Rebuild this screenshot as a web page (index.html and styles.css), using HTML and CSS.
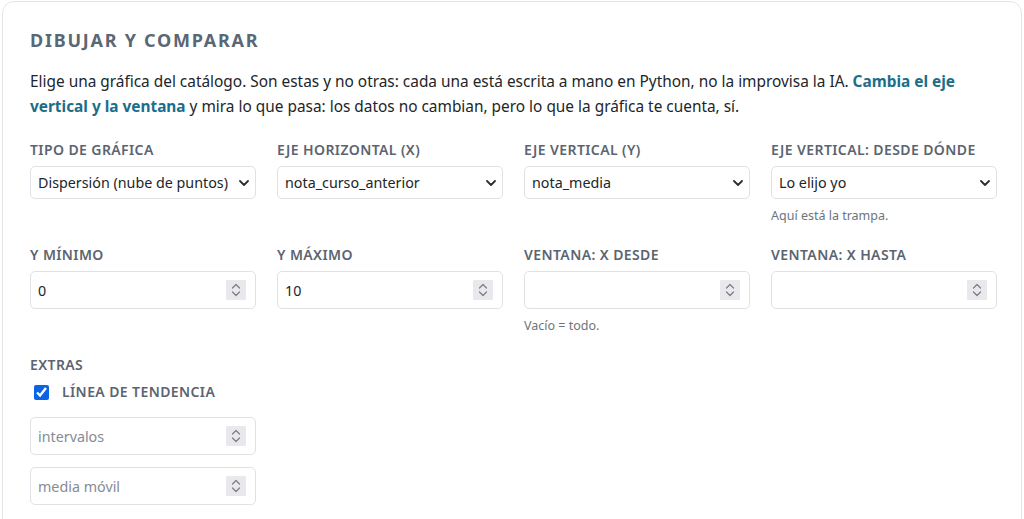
FILE: index.html
```html
<!DOCTYPE html>
<html lang="es">
<head>
<meta charset="utf-8">
<title>Dibujar y comparar</title>
<link rel="stylesheet" href="styles.css">
</head>
<body>
<section class="card">
  <h2 class="card-title">Dibujar y comparar</h2>
  <p class="intro">Elige una gráfica del catálogo. Son estas y no otras: cada una está escrita a mano en Python, no la improvisa la IA. <strong>Cambia el eje vertical y la ventana</strong> y mira lo que pasa: los datos no cambian, pero lo que la gráfica te cuenta, sí.</p>

  <div class="controls">
    <div class="field">
      <label class="field-label">Tipo de gráfica</label>
      <div class="select-box">
        <select class="select"><option>Dispersión (nube de puntos)</option></select>
        <svg class="chevron" viewBox="0 0 10 6"><path d="M1 1l4 4 4-4"/></svg>
      </div>
    </div>
    <div class="field">
      <label class="field-label">Eje horizontal (X)</label>
      <div class="select-box">
        <select class="select"><option>nota_curso_anterior</option></select>
        <svg class="chevron" viewBox="0 0 10 6"><path d="M1 1l4 4 4-4"/></svg>
      </div>
    </div>
    <div class="field">
      <label class="field-label">Eje vertical (Y)</label>
      <div class="select-box">
        <select class="select"><option>nota_media</option></select>
        <svg class="chevron" viewBox="0 0 10 6"><path d="M1 1l4 4 4-4"/></svg>
      </div>
    </div>
    <div class="field">
      <label class="field-label">Eje vertical: desde dónde</label>
      <div class="select-box">
        <select class="select"><option>Lo elijo yo</option></select>
        <svg class="chevron" viewBox="0 0 10 6"><path d="M1 1l4 4 4-4"/></svg>
      </div>
      <small class="hint">Aquí está la trampa.</small>
    </div>

    <div class="field">
      <label class="field-label">Y mínimo</label>
      <div class="number-box">
        <input class="number" type="text" value="0">
        <span class="spin"><svg viewBox="0 0 20 20"><path d="M6.5 8l3.5-3.5 3.5 3.5M6.5 12l3.5 3.5 3.5-3.5"/></svg></span>
      </div>
    </div>
    <div class="field">
      <label class="field-label">Y máximo</label>
      <div class="number-box">
        <input class="number" type="text" value="10">
        <span class="spin"><svg viewBox="0 0 20 20"><path d="M6.5 8l3.5-3.5 3.5 3.5M6.5 12l3.5 3.5 3.5-3.5"/></svg></span>
      </div>
    </div>
    <div class="field">
      <label class="field-label">Ventana: X desde</label>
      <div class="number-box">
        <input class="number" type="text" value="">
        <span class="spin"><svg viewBox="0 0 20 20"><path d="M6.5 8l3.5-3.5 3.5 3.5M6.5 12l3.5 3.5 3.5-3.5"/></svg></span>
      </div>
      <small class="hint">Vacío = todo.</small>
    </div>
    <div class="field">
      <label class="field-label">Ventana: X hasta</label>
      <div class="number-box">
        <input class="number" type="text" value="">
        <span class="spin"><svg viewBox="0 0 20 20"><path d="M6.5 8l3.5-3.5 3.5 3.5M6.5 12l3.5 3.5 3.5-3.5"/></svg></span>
      </div>
    </div>

    <div class="field extras">
      <span class="field-label">Extras</span>
      <label class="check-row">
        <input class="check" type="checkbox" checked>
        <span class="field-label">Línea de tendencia</span>
      </label>
      <div class="number-box">
        <input class="number" type="text" placeholder="intervalos">
        <span class="spin"><svg viewBox="0 0 20 20"><path d="M6.5 8l3.5-3.5 3.5 3.5M6.5 12l3.5 3.5 3.5-3.5"/></svg></span>
      </div>
      <div class="number-box">
        <input class="number" type="text" placeholder="media móvil">
        <span class="spin"><svg viewBox="0 0 20 20"><path d="M6.5 8l3.5-3.5 3.5 3.5M6.5 12l3.5 3.5 3.5-3.5"/></svg></span>
      </div>
    </div>
  </div>
</section>
</body>
</html>
```

FILE: styles.css
```css
* {
  box-sizing: border-box;
}

body {
  margin: 0;
  background: #ffffff;
  font-family: "Noto Sans", "Open Sans", sans-serif;
  color: #212529;
}

.card {
  margin: 1px 2px 0;
  border: 1px solid #e2e6ea;
  border-radius: 12px;
  padding: 26px 24px 20px 27px;
  min-height: 540px;
}

.card-title {
  margin: 0;
  font-size: 18px;
  line-height: 24px;
  font-weight: 700;
  letter-spacing: 1.75px;
  text-transform: uppercase;
  color: #5a6775;
}

.intro {
  margin: 17px 0 0;
  font-size: 15.4px;
  line-height: 25px;
}

.intro strong {
  color: #1a6e8a;
  font-weight: 700;
}

.controls {
  margin-top: 21px;
  display: grid;
  grid-template-columns: repeat(4, minmax(0, 1fr));
  column-gap: 21px;
  row-gap: 20px;
}

.field {
  display: flex;
  flex-direction: column;
  min-width: 0;
}

.field-label {
  display: block;
  font-size: 14px;
  line-height: 20px;
  font-weight: 600;
  letter-spacing: 0.4px;
  text-transform: uppercase;
  color: #5b6470;
  margin-bottom: 6px;
}

.select-box {
  position: relative;
  display: flex;
  align-items: center;
  height: 33px;
  border: 1px solid #dee2e6;
  border-radius: 5px;
  background: #fff;
}

.select {
  appearance: none;
  -webkit-appearance: none;
  flex: 1;
  min-width: 0;
  height: 100%;
  border: 0;
  background: transparent;
  padding: 0 22px 0 7px;
  font: inherit;
  font-size: 14.3px;
  color: #212529;
  outline: none;
}

.chevron {
  position: absolute;
  right: 6px;
  top: 13px;
  width: 10px;
  height: 6px;
  fill: none;
  stroke: #2b2f33;
  stroke-width: 1.8;
  stroke-linecap: round;
  stroke-linejoin: round;
  pointer-events: none;
}

.hint {
  margin-top: 8px;
  font-size: 12.5px;
  line-height: 18px;
  color: #6c757d;
}

.number-box {
  display: flex;
  align-items: center;
  height: 38px;
  border: 1px solid #dee2e6;
  border-radius: 5px;
  background: #fff;
  padding-right: 9px;
}

.number {
  flex: 1;
  min-width: 0;
  height: 100%;
  border: 0;
  background: transparent;
  padding: 0 0 0 7px;
  font: inherit;
  font-size: 14.3px;
  color: #212529;
  outline: none;
}

.number::placeholder {
  color: #868c93;
}

.spin {
  width: 20px;
  height: 20px;
  background: #e9e9ed;
  border-radius: 1px;
}

.spin svg {
  display: block;
  width: 20px;
  height: 20px;
  fill: none;
  stroke: #7a7d82;
  stroke-width: 1.2;
  stroke-linecap: round;
  stroke-linejoin: round;
}

.extras {
  grid-column: 1;
}

.extras > .field-label {
  margin-bottom: 7px;
}

.check-row {
  display: flex;
  align-items: center;
  gap: 13px;
  padding-left: 4px;
  margin-bottom: 15px;
}

.check-row .field-label {
  margin: 0;
}

.check {
  margin: 0;
  width: 15px;
  height: 15px;
  accent-color: #0b63e5;
}

.extras .number-box + .number-box {
  margin-top: 12px;
}
```
